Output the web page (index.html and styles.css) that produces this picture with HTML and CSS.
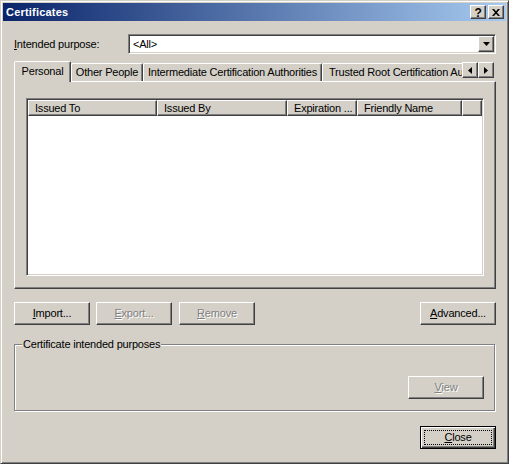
FILE: index.html
```html
<!DOCTYPE html>
<html>
<head>
<meta charset="utf-8">
<link rel="stylesheet" href="styles.css">
</head>
<body>
<div class="window">
  <div class="titlebar">
    <span class="title">Certificates</span>
    <div class="tb-buttons">
      <div class="raised tb-btn"><span class="tb-help">?</span></div>
      <div class="raised tb-btn">
        <svg width="8" height="7" viewBox="0 0 8 7"><path d="M0 0h2l2 2.2L6 0h2L5 3.5 8 7H6L4 4.8 2 7H0l3-3.5z" fill="#000"/></svg>
      </div>
    </div>
  </div>
  <div class="content">
    <div class="purpose-row">
      <label class="purpose-label"><u>I</u>ntended purpose:</label>
      <div class="combo">
        <span class="combo-value">&lt;All&gt;</span>
        <span class="raised combo-btn">
          <svg width="7" height="4" viewBox="0 0 7 4"><path d="M0 0h7L3.5 4z" fill="#000"/></svg>
        </span>
      </div>
    </div>

    <div class="tabs">
      <div class="tabstrip">
        <div class="tab selected">Personal</div>
        <div class="tab w-other">Other People</div>
        <div class="tab w-inter">Intermediate Certification Authorities</div>
        <div class="tab w-trusted">Trusted Root Certification Authorities</div>
      </div>
      <div class="tab-scroll">
        <span class="raised scroll-btn"><svg width="4" height="7" viewBox="0 0 4 7"><path d="M4 0v7L0 3.5z" fill="#000"/></svg></span>
        <span class="raised scroll-btn"><svg width="4" height="7" viewBox="0 0 4 7"><path d="M0 0v7L4 3.5z" fill="#000"/></svg></span>
      </div>
    </div>

    <div class="tabpanel">
      <div class="listview">
        <div class="lv-header">
          <div class="lv-col c1">Issued To</div>
          <div class="lv-col c2">Issued By</div>
          <div class="lv-col c3">Expiration ...</div>
          <div class="lv-col c4">Friendly Name</div>
          <div class="lv-col c5"></div>
        </div>
        <div class="lv-body"></div>
      </div>
    </div>

    <div class="btn-row">
      <div class="raised btn"><span><u>I</u>mport...</span></div>
      <div class="raised btn disabled gap6"><span><u>E</u>xport...</span></div>
      <div class="raised btn disabled gap7"><span><u>R</u>emove</span></div>
      <div class="raised btn push-right"><span><u>A</u>dvanced...</span></div>
    </div>

    <div class="group">
      <span class="group-label">Certificate intended purposes</span>
      <div class="raised btn disabled"><span><u>V</u>iew</span></div>
    </div>

    <div class="footer">
      <div class="btn default"><span class="focus"><u>C</u>lose</span></div>
    </div>
  </div>
</div>
</body>
</html>
```

FILE: styles.css
```css
* { box-sizing: border-box; }
html, body { margin: 0; padding: 0; }
body {
  font-family: "Liberation Sans", Arial, sans-serif;
  font-size: 11px;
  letter-spacing: -0.2px;
  line-height: 13px;
  color: #000;
  background: #d4d0c8;
}
u { text-decoration: underline; text-underline-offset: 1px; }

.window {
  width: 509px;
  height: 464px;
  overflow: hidden;
  background: #d4d0c8;
  border: 1px solid;
  border-color: #d4d0c8 #404040 #404040 #d4d0c8;
  box-shadow: inset 1px 1px #fff, inset -1px -1px #808080;
  padding: 2px;
  display: flex;
  flex-direction: column;
}

.raised {
  background: #d4d0c8;
  border: 1px solid;
  border-color: #fff #404040 #404040 #fff;
  box-shadow: inset -1px -1px #808080;
}

/* Title bar */
.titlebar {
  height: 18px;
  flex: 0 0 18px;
  display: flex;
  align-items: center;
  background: linear-gradient(to right, #0a246a, #a6caf0);
  padding-left: 3px;
  padding-right: 2px;
}
.title {
  color: #fff;
  font-weight: bold;
  font-size: 11px;
  letter-spacing: 0.2px;
  flex: 1;
}
.tb-buttons { display: flex; gap: 2px; }
.tb-btn {
  width: 16px;
  height: 14px;
  display: flex;
  align-items: center;
  justify-content: center;
}
.tb-help {
  font-weight: bold;
  font-size: 12px;
  line-height: 12px;
  margin-top: 1px;
}

/* Content */
.content {
  flex: 1;
  min-height: 0;
  display: flex;
  flex-direction: column;
  padding: 13px 10px 0 11px;
}

.purpose-row {
  display: flex;
  align-items: center;
  height: 20px;
}
.purpose-label { flex: 0 0 114px; }
.combo {
  flex: 1;
  height: 20px;
  display: flex;
  align-items: center;
  background: #fff;
  border: 1px solid;
  border-color: #808080 #fff #fff #808080;
  box-shadow: inset 1px 1px #404040, inset -1px -1px #d4d0c8;
  padding: 1px;
}
.combo-value { flex: 1; padding-left: 3px; }
.combo-btn {
  width: 16px;
  height: 16px;
  display: flex;
  align-items: center;
  justify-content: center;
}

/* Tabs */
.tabs {
  margin-top: 7px;
  height: 20px;
  display: flex;
  align-items: flex-end;
}
.tabstrip {
  flex: 0 0 448px;
  min-width: 0;
  width: 448px;
  height: 20px;
  display: flex;
  align-items: flex-end;
  overflow-x: clip;
  overflow-y: visible;
}
.tab {
  flex: 0 0 auto;
  height: 18px;
  display: flex;
  align-items: center;
  justify-content: center;
  white-space: nowrap;
  background: #d4d0c8;
  border-top: 1px solid #fff;
  border-left: 1px solid #fff;
  border-right: 1px solid #404040;
  box-shadow: inset -1px 0 #808080;
  border-radius: 2px 2px 0 0;
}
.tab.selected {
  width: 57px;
  height: 21px;
  margin-bottom: -1px;
  position: relative;
  z-index: 1;
  padding-bottom: 2px;
}
.w-other { width: 72px; }
.w-inter { width: 179px; }
.w-trusted { justify-content: flex-start; padding-left: 6px; padding-right: 6px; }

.tab-scroll {
  flex: 0 0 auto;
  align-self: flex-start;
  margin-top: 1px;
  display: flex;
}
.scroll-btn {
  width: 16px;
  height: 16px;
  display: flex;
  align-items: center;
  justify-content: center;
}

/* Tab panel */
.tabpanel {
  height: 208px;
  flex: 0 0 208px;
  display: flex;
  flex-direction: column;
  border: 1px solid;
  border-color: #fff #404040 #404040 #fff;
  box-shadow: inset -1px -1px #808080;
  padding: 16px 11px 12px 11px;
}
.listview {
  flex: 1;
  display: flex;
  flex-direction: column;
  background: #fff;
  border: 1px solid;
  border-color: #808080 #fff #fff #808080;
  box-shadow: inset 1px 1px #404040, inset -1px -1px #d4d0c8;
  padding: 1px;
}
.lv-header {
  display: flex;
  height: 16px;
  flex: 0 0 16px;
}
.lv-col {
  height: 16px;
  background: #d4d0c8;
  border: 1px solid;
  border-color: #fff #404040 #404040 #fff;
  box-shadow: inset -1px -1px #808080;
  padding-left: 6px;
  line-height: 14px;
  white-space: nowrap;
  overflow: hidden;
}
.c1 { flex: 0 0 129px; }
.c2 { flex: 0 0 130px; }
.c3 { flex: 0 0 70px; }
.c4 { flex: 0 0 105px; }
.c5 { flex: 1 1 auto; }
.lv-body { flex: 1; }

/* Buttons */
.btn-row {
  margin-top: 13px;
  display: flex;
  height: 23px;
}
.btn {
  width: 76px;
  height: 23px;
  display: flex;
  align-items: center;
  justify-content: center;
  box-shadow: inset -1px -1px #808080;
}
.btn span { line-height: 13px; }
.btn.disabled { color: #808080; text-shadow: 1px 1px 0 #fff; }
.gap6 { margin-left: 6px; }
.gap7 { margin-left: 7px; }
.push-right { margin-left: auto; }

/* Group box */
.group {
  position: relative;
  margin-top: 19px;
  margin-right: 1px;
  height: 67px;
  border: 1px solid #808080;
  box-shadow: inset 1px 1px #fff, 1px 1px #fff;
  display: flex;
  justify-content: flex-end;
  align-items: flex-end;
  padding: 0 10px 11px 0;
}
.group-label {
  position: absolute;
  top: -7px;
  left: 7px;
  padding: 0 1px;
  background: #d4d0c8;
}

/* Footer */
.footer {
  margin-top: 15px;
  display: flex;
  justify-content: flex-end;
}
.btn.default {
  width: 76px;
  height: 23px;
  border: 1px solid #000;
  background: #d4d0c8;
  box-shadow: inset 1px 1px #fff, inset -1px -1px #404040, inset -2px -2px #808080;
  padding: 3px;
}
.focus {
  flex: 1;
  align-self: stretch;
  display: flex;
  align-items: center;
  justify-content: center;
  border: 1px dotted #000;
}
```
